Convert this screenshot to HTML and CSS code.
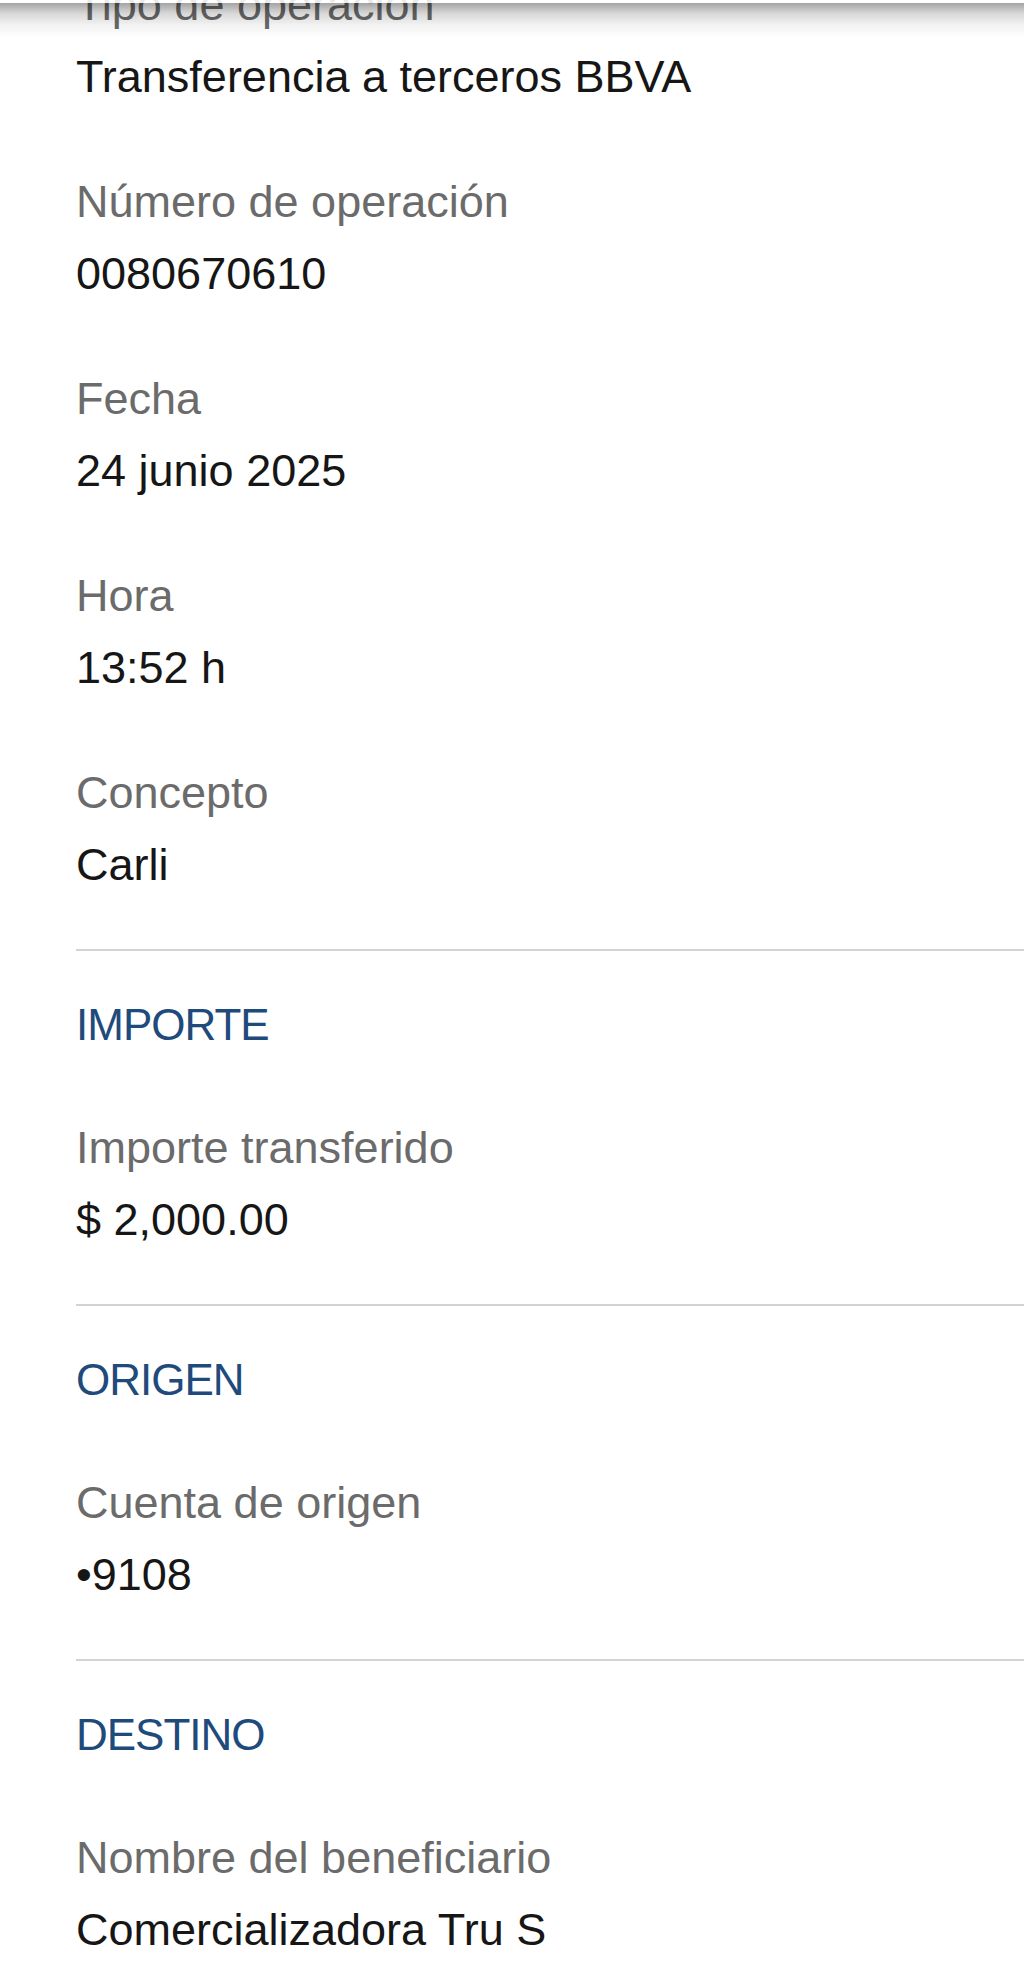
FILE: index.html
```html
<!DOCTYPE html>
<html lang="es">
<head>
<meta charset="utf-8">
<title>Detalle de operación</title>
<link rel="stylesheet" href="styles.css">
</head>
<body>
<div class="top-shadow"></div>
<main class="detail">
  <section class="group">
    <div class="field">
      <div class="label">Tipo de operación</div>
      <div class="value">Transferencia a terceros BBVA</div>
    </div>
    <div class="field">
      <div class="label">Número de operación</div>
      <div class="value">0080670610</div>
    </div>
    <div class="field">
      <div class="label">Fecha</div>
      <div class="value">24 junio 2025</div>
    </div>
    <div class="field">
      <div class="label">Hora</div>
      <div class="value">13:52 h</div>
    </div>
    <div class="field">
      <div class="label">Concepto</div>
      <div class="value">Carli</div>
    </div>
  </section>
  <section class="group">
    <h2 class="group-title">IMPORTE</h2>
    <div class="field">
      <div class="label">Importe transferido</div>
      <div class="value">$ 2,000.00</div>
    </div>
  </section>
  <section class="group">
    <h2 class="group-title">ORIGEN</h2>
    <div class="field">
      <div class="label">Cuenta de origen</div>
      <div class="value">•9108</div>
    </div>
  </section>
  <section class="group">
    <h2 class="group-title">DESTINO</h2>
    <div class="field">
      <div class="label">Nombre del beneficiario</div>
      <div class="value">Comercializadora Tru S</div>
    </div>
  </section>
</main>
</body>
</html>
```
FILE: styles.css
```css
html, body {
  margin: 0;
  padding: 0;
  background: #ffffff;
}

body {
  font-family: "Liberation Sans", Arial, Helvetica, sans-serif;
  overflow: hidden;
}

.top-shadow {
  position: fixed;
  top: 0;
  left: 0;
  right: 0;
  height: 38px;
  z-index: 2;
  background: linear-gradient(to bottom,
    rgba(255, 255, 255, 0.85) 0,
    rgba(255, 255, 255, 0.85) 3px,
    rgba(0, 0, 0, 0.36) 3px,
    rgba(0, 0, 0, 0.16) 13px,
    rgba(0, 0, 0, 0.05) 25px,
    rgba(0, 0, 0, 0) 38px);
}

.detail {
  margin-top: -31px;
  padding-left: 76px;
}

.group {
  display: flex;
  flex-direction: column;
  gap: 53px;
  padding-bottom: 48px;
  border-bottom: 2px solid #d3d3d3;
}

.group + .group {
  padding-top: 38px;
}

.group:last-child {
  border-bottom: none;
}

.group-title {
  margin: 0 0 -2px;
  font-size: 44px;
  line-height: 72px;
  font-weight: 400;
  letter-spacing: -1px;
  color: #1f4a7c;
}

.field {
  display: flex;
  flex-direction: column;
}

.label,
.value {
  font-size: 45px;
  line-height: 72px;
  white-space: nowrap;
}

.label {
  color: #6b6b6b;
}

.value {
  color: #161616;
}
```
